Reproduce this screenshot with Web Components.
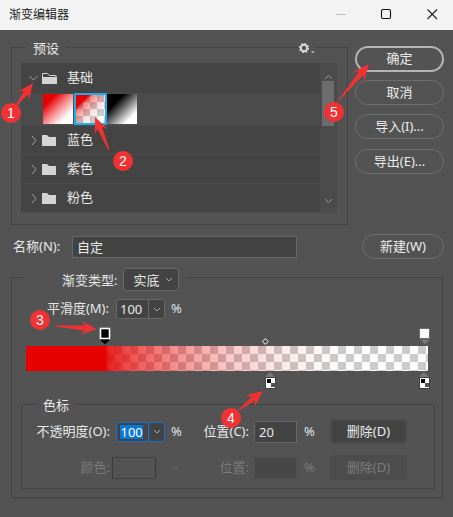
<!DOCTYPE html>
<html lang="zh">
<head>
<meta charset="utf-8">
<title>渐变编辑器</title>
<style>
  html, body { margin: 0; background: #535353; }
  body {
    width: 453px;
    height: 517px;
    overflow: hidden;
    position: relative;
    color: #e8e8e8;
    font: 13px/1.2 "Noto Sans", "Noto Sans CJK SC", sans-serif;
  }
  .main { padding: 16px 0 0 11px; }
  .top { display: flex; gap: 7px; }
  .side { display: flex; flex-direction: column; width: 89px; }
  .name { display: flex; align-items: center; height: 25px; margin-top: 9px; }
  .name span { width: 59px; padding-left: 2px; }
  .pct { padding-left: 6px; color: #dfe6ee; }
  .row { display: grid; grid-template-columns: 94px 49px 38px 51px 43px 33px 77px; align-items: center; height: 24px; }
  .row span.lab { text-align: right; padding-right: 6px; white-space: nowrap; }
  .row span.lab.b { padding-right: 5px; }
  .off { color: #7a7a7a; }
  .smooth { margin-top: 21px; height: 20px; margin-left: 10px; }
  .swatch { width: 42px; height: 20px; margin-left: -4px; border: 1px solid #3c3c3c; }
  .chev { margin-left: 6px; display: block; }
  .thumbs { display: flex; height: 33px; align-items: center; padding: 0 0 2px 22px; box-sizing: border-box; background: #4b4b4b; }
</style>
</head>
<body>
<template id="t-title">
  <style>
    :host { display: flex; align-items: center; height: 30px; background: #f3f3f3; color: #1c1c1c; padding-left: 9px; font-size: 12px; }
    svg { position: absolute; top: 0; right: 0; }
  </style>
  <slot></slot>
  <svg width="130" height="30" viewBox="323 0 130 30" fill="none">
    <path d="M336 14.5h10" stroke="#bdbdbd"/>
    <rect x="381.5" y="9.5" width="9" height="9" rx="1.5" stroke="#111" stroke-width="1.1"/>
    <path d="M427.5 9.5l9.5 9.5M437 9.5l-9.5 9.5" stroke="#222" stroke-width="1.1"/>
  </svg>
</template>

<template id="t-group">
  <style>
    :host { display: block; position: relative; box-sizing: border-box; border: 1px solid #444; }
    .legend { position: absolute; top: -10px; left: var(--legend-left, 14px); background: #535353; padding: var(--legend-pad, 0 7px); line-height: 20px; display: flex; align-items: center; gap: 6px; }
    ::slotted([slot=extra]) { position: absolute; }
  </style>
  <div class="legend"><slot name="legend"></slot></div>
  <slot name="extra"></slot>
  <slot></slot>
</template>

<template id="t-btn">
  <style>
    :host { display: flex; align-items: center; justify-content: center; box-sizing: border-box; height: 25px; border: 1.5px solid #6e6e6e; border-radius: 13px; color: #ececec; white-space: nowrap; }
    :host([primary]) { border: 2px solid #b5b5b5; height: 26px; }
    :host([flat]) { border-radius: 3px; border: 2px solid #4c4c4c; background: #434343; height: 25px; }
    :host([flat][disabled]) { background: #4d4d4d; color: #7b7b7b; }
  </style>
  <slot></slot>
</template>

<template id="t-combo">
  <style>
    :host { display: flex; box-sizing: border-box; width: 49px; height: 20px; border: 1px solid #676767; border-radius: 3px; background: #434343; align-items: stretch; }
    :host([focused]) { border-color: #1a6fd0; }
    .v { flex: 1; padding-left: 3px; line-height: 18px; }
    .a { width: 15px; border-left: 1px solid #676767; display: flex; align-items: center; justify-content: center; }
    :host([focused]) .a { border-left-color: #1a6fd0; }
    b { font-weight: 400; }
    :host([focused]) b { background: #0a78d7; color: #fff; display: inline-block; height: 14px; line-height: 14px; padding: 0 .5px; }
  </style>
  <div class="v"><b><slot></slot></b></div>
  <div class="a"><svg width="8" height="5"><path d="M1 1l3 3 3-3" fill="none" stroke="#a8a8a8"/></svg></div>
</template>

<template id="t-field">
  <style>
    :host { display: block; box-sizing: border-box; height: 22px; border: 1px solid #666; background: #434343; padding-left: 4px; line-height: 20px; }
    :host([disabled]) { border-color: #505050; background: #474747; }
  </style>
  <slot></slot>
</template>

<template id="t-row">
  <style>
    :host { display: flex; align-items: center; box-sizing: border-box; height: 29px; background: #444; border-bottom: 1px solid #4b4b4b; padding-left: 8px; }
    :host([open]) { height: 30px; border-bottom: 0; }
    svg { display: block; }
    .f { margin: 0 10px 0 4px; }
  </style>
  <svg width="9" height="11" id="c" fill="none" stroke="#a0a0a0"></svg>
  <svg class="f" width="15" height="12" id="f" fill="#d4d4d4"></svg>
  <slot></slot>
</template>

<template id="t-thumb">
  <style>
    :host { display: block; width: 30px; height: 30px; background: var(--g); }
    :host([selected]) { border: 2px solid #18aef0; width: 29px; height: 28px; margin-left: 1px; }
  </style>
</template>

<template id="t-ramp">
  <style>
    :host { display: block; position: relative; height: 25px; width: 402px; margin: 27px 0 0 14px;
      background: repeating-conic-gradient(#ccc 0 25%, #fff 0 50%) 0 0 / 16px 16px; }
    .fill { position: absolute; inset: 0; background: linear-gradient(90deg, #e60000 19.7%, rgba(230,0,0,.86) 20.6%, rgba(230,0,0,.68) 26%, rgba(230,0,0,.42) 38%, rgba(230,0,0,.22) 50%, rgba(230,0,0,.09) 62%, rgba(230,0,0,.02) 74%, rgba(230,0,0,0) 84%); }
    svg { position: absolute; overflow: visible; left: 0; top: 0; }
  </style>
  <div class="fill"></div>
  <svg width="402" height="25" viewBox="26 346 402 25">
    <!-- top stops -->
    <rect x="100.5" y="328.5" width="9" height="10" fill="#000" stroke="#fff" stroke-width="1.6"/>
    <path d="M100 339.5h10l-5 5z" fill="#000"/>
    <rect x="419.5" y="328.5" width="10" height="10" fill="#fff" stroke="#6b6b6b"/>
    <path d="M420 339.5h10l-5 5z" fill="#777"/>
    <!-- midpoint -->
    <path d="M265.3 338.6l2.9 2.9-2.9 2.9-2.9-2.9z" fill="none" stroke="#f4f4f4"/>
    <!-- bottom stops -->
    <g id="st">
      <path d="M265 377l5-5 5 5z" fill="#777"/>
      <rect x="265.5" y="377.5" width="10" height="11" fill="#fff" stroke="#404040"/>
      <rect x="267" y="379" width="4" height="4" fill="#000"/>
      <rect x="271" y="383" width="4" height="4" fill="#555"/>
    </g>
    <use href="#st" x="154"/>
  </svg>
</template>

<template id="t-pin">
  <style>
    :host { position: absolute; inset: 0; pointer-events: none; display: block; }
    svg { position: absolute; left: 0; top: 0; }
    div { position: absolute; width: 20px; height: 20px; margin: -10px 0 0 -10px; border-radius: 50%; background: #f23232; color: #fff; text-align: center; font: 14px/20px "Liberation Sans", sans-serif; }
  </style>
  <svg width="453" height="517"><polygon fill="#f23232"/></svg>
  <div><slot></slot></div>
</template>

<template id="t-list">
  <style>
    :host { display: grid; grid-template-columns: 299px 17px; height: 150px; background: #4b4b4b; }
    .rows { display: flex; flex-direction: column; }
    .bar { position: relative; }
    .knob { position: absolute; left: 2px; top: 18px; width: 12px; height: 45px; background: #6c6c6c; }
    .up { position: absolute; top: 11px; left: 4px; }
    .down { position: absolute; bottom: 9px; left: 4px; }
  </style>
  <div class="rows"><slot></slot></div>
  <div class="bar">
    <svg class="up" width="9" height="6"><path d="M1 5l3.500-3.500L8 5" fill="none" stroke="#9a9a9a"/></svg>
    <div class="knob"></div>
    <svg class="down" width="9" height="6"><path d="M1 1l3.500 3.500L8 1" fill="none" stroke="#9a9a9a"/></svg>
  </div>
</template>

<script>
  // shared base: clone the template into an open shadow root
  class Base extends HTMLElement {
    constructor() {
      super();
      this.attachShadow({ mode: "open" });
      const id = "t-" + this.localName.split("-")[1];
      this.shadowRoot.appendChild(document.getElementById(id).content.cloneNode(true));
    }
  }

  class DlgRow extends Base {
    connectedCallback() {
      const open = this.hasAttribute("open");
      this.shadowRoot.getElementById("c").innerHTML = open
        ? '<path d="M.5 3l4 4 4-4"/>'
        : '<path d="M3 1l4 4.500-4 4.500"/>';
      this.shadowRoot.getElementById("f").innerHTML = open
        ? '<path d="M.5 5V1.500h5l2 2h6.500V5" fill="none" stroke="#d4d4d4"/><path d="M0 5h15v7H0z"/>'
        : '<path d="M0 1h5l2 2h7v9H0z"/>';
    }
  }

  class DlgPin extends Base {
    connectedCallback() {
      const [bx, by, tx, ty, hx, hy] = this.getAttribute("at").split(",").map(Number);
      const badge = this.shadowRoot.querySelector("div");
      badge.style.left = bx + "px";
      badge.style.top = by + "px";
      const len = Math.hypot(hx - tx, hy - ty);
      const ux = (hx - tx) / len, uy = (hy - ty) / len;
      const pt = (along, side) => [tx + ux * along - uy * side, ty + uy * along + ux * side].map((v) => v.toFixed(1)).join(",");
      const neck = len - 12, barb = len - 16;
      this.shadowRoot.querySelector("polygon").setAttribute("points", [
        pt(0, 0.5), pt(neck, 2.6), pt(barb, 7), pt(len, 0), pt(barb, -7), pt(neck, -2.6), pt(0, -0.5),
      ].join(" "));
    }
  }

  customElements.define("dlg-title", class extends Base {});
  customElements.define("dlg-group", class extends Base {});
  customElements.define("dlg-btn", class extends Base {});
  customElements.define("dlg-combo", class extends Base {});
  customElements.define("dlg-field", class extends Base {});
  customElements.define("dlg-row", DlgRow);
  customElements.define("dlg-thumb", class extends Base {});
  customElements.define("dlg-ramp", class extends Base {});
  customElements.define("dlg-pin", DlgPin);
  customElements.define("dlg-list", class extends Base {});
</script>

<dlg-title>渐变编辑器</dlg-title>

<div class="main">
  <div class="top">
    <dlg-group style="width:337px;height:178px;margin-top:1px;padding:15px 10px 11px 9px">
      <span slot="legend">预设</span>
      <svg slot="extra" style="top:-6px;left:286px;background:#535353" width="18" height="12" viewBox="0 0 18 12">
        <circle cx="6" cy="6" r="3.200" fill="none" stroke="#d8d8d8" stroke-width="2"/>
        <circle cx="6" cy="6" r="4.300" fill="none" stroke="#d8d8d8" stroke-width="1.600" stroke-dasharray="1.700 1.677"/>
        <path d="M13 9.500h3.500l-1.750 1.750z" fill="#dcdcdc"/>
      </svg>
      <dlg-list>
        <dlg-row open>基础</dlg-row>
        <div class="thumbs">
          <dlg-thumb style="--g:linear-gradient(135deg,#e60000 22%,#f58a8a 50%,#fff 78%)"></dlg-thumb>
          <dlg-thumb selected style="--g:linear-gradient(135deg,#e60000 22%,rgba(230,0,0,.5) 29%,rgba(230,0,0,.18) 50%,rgba(230,0,0,0) 76%),repeating-conic-gradient(#ccc 0 25%,#fff 0 50%) 0 0/14px 14px"></dlg-thumb>
          <dlg-thumb style="--g:linear-gradient(135deg,#000 28%,#fff 80%)"></dlg-thumb>
        </div>
        <dlg-row>蓝色</dlg-row>
        <dlg-row>紫色</dlg-row>
        <dlg-row>粉色</dlg-row>
      </dlg-list>
    </dlg-group>
    <div class="side">
      <dlg-btn primary>确定</dlg-btn>
      <dlg-btn style="margin-top:8px">取消</dlg-btn>
      <dlg-btn style="margin-top:9px">导入(I)...</dlg-btn>
      <dlg-btn style="margin-top:10px">导出(E)...</dlg-btn>
    </div>
  </div>

  <div class="name">
    <span>名称(N):</span>
    <dlg-field style="width:225px">自定</dlg-field>
    <dlg-btn style="width:82px;margin-left:65px">新建(W)</dlg-btn>
  </div>

  <dlg-group style="width:432px;height:221px;margin-top:18px;--legend-left:13px;--legend-pad:0 6px 0 37px">
    <span slot="legend" style="display:flex;align-items:center;gap:6px">
      渐变类型:
      <span style="display:flex;align-items:center;justify-content:space-between;box-sizing:border-box;width:56px;height:23px;border:1px solid #676767;border-radius:3px;background:#434343;padding:0 5px 0 9px">实底<svg width="8" height="5"><path d="M1 1l3 3 3-3" fill="none" stroke="#a8a8a8"/></svg></span>
    </span>
    <div class="row smooth">
      <span class="lab" style="padding-right:7px">平滑度(M):</span>
      <dlg-combo>100</dlg-combo>
      <span class="pct">%</span>
    </div>
    <dlg-ramp></dlg-ramp>
    <dlg-group style="width:414px;height:85px;margin:33px 0 0 9px;--legend-left:14px;--legend-pad:0 7px">
      <span slot="legend">色标</span>
      <div class="row" style="margin-top:14px">
        <span class="lab">不透明度(O):</span>
        <dlg-combo focused>100</dlg-combo>
        <span class="pct">%</span>
        <span class="lab b">位置(C):</span>
        <dlg-field>20</dlg-field>
        <span class="pct" style="padding-left:7px">%</span>
        <dlg-btn flat>删除(D)</dlg-btn>
      </div>
      <div class="row" style="margin-top:12px">
        <span class="lab off">颜色:</span>
        <div class="swatch"></div>
        <svg class="chev" width="8" height="5"><path d="M1 1l3 3 3-3" fill="none" stroke="#6e6e6e"/></svg>
        <span class="lab b off">位置:</span>
        <dlg-field disabled></dlg-field>
        <span class="pct off" style="padding-left:7px">%</span>
        <dlg-btn flat disabled>删除(D)</dlg-btn>
      </div>
    </dlg-group>
  </dlg-group>
</div>

<dlg-pin at="11,113,16,106,33,83">1</dlg-pin>
<dlg-pin at="123,161,109,150,95,117">2</dlg-pin>
<dlg-pin at="40,320,56,326,97,329">3</dlg-pin>
<dlg-pin at="231,418,239,410,263,391">4</dlg-pin>
<dlg-pin at="334,112,339,100,369,64">5</dlg-pin>
</body>
</html>
